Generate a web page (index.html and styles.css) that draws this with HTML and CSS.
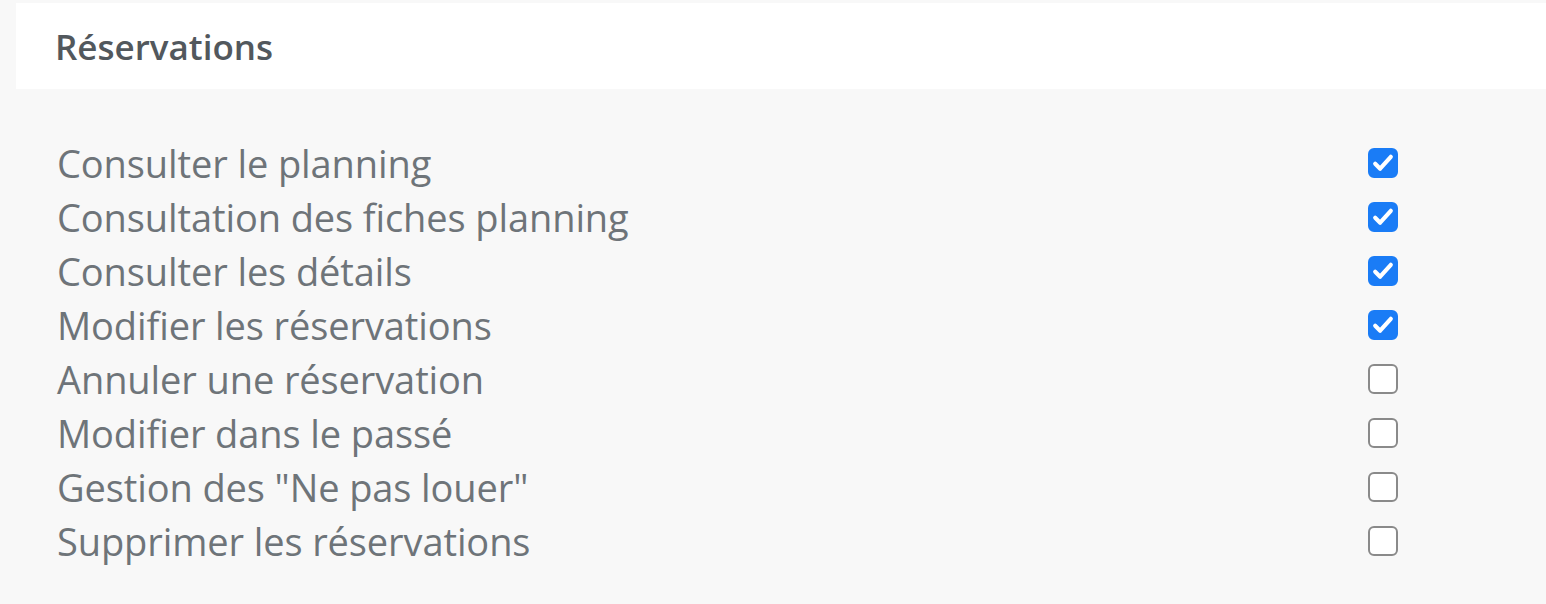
FILE: index.html
```html
<!DOCTYPE html>
<html lang="fr">
<head>
    <meta charset="UTF-8">
    <title>Réservations</title>
    <link rel="stylesheet" href="styles.css">
</head>
<body>
    <div class="card">
        <div class="card-header">Réservations</div>
        <div class="card-body">
            <label class="perm"><span>Consulter le planning</span><input type="checkbox" checked></label>
            <label class="perm"><span>Consultation des fiches planning</span><input type="checkbox" checked></label>
            <label class="perm"><span>Consulter les détails</span><input type="checkbox" checked></label>
            <label class="perm"><span>Modifier les réservations</span><input type="checkbox" checked></label>
            <label class="perm"><span>Annuler une réservation</span><input type="checkbox"></label>
            <label class="perm"><span>Modifier dans le passé</span><input type="checkbox"></label>
            <label class="perm"><span>Gestion des "Ne pas louer"</span><input type="checkbox"></label>
            <label class="perm"><span>Supprimer les réservations</span><input type="checkbox"></label>
        </div>
    </div>
</body>
</html>
```
FILE: styles.css
```css
body {
    margin: 0;
    background-color: #f8f8f8;
    font-family: "Open Sans", "Noto Sans", sans-serif;
}
.card {
    margin: 3px 0 0 16px;
}
.card-header {
    background-color: #fff;
    height: 86px;
    padding-left: 39px;
    display: flex;
    align-items: center;
    font-size: 35px;
    font-weight: 600;
    color: #52585d;
}
.card-body {
    padding: 47px 0 0 41px;
}
.perm {
    display: flex;
    align-items: center;
    justify-content: space-between;
    width: 1341px;
    height: 54px;
    font-size: 38px;
    color: #6e7479;
    letter-spacing: -0.1px;
}
.perm input {
    appearance: none;
    width: 30px;
    height: 30px;
    margin: 0;
    border: 2px solid #8a8a8a;
    border-radius: 6px;
    background-color: #fff;
}
.perm input:checked {
    border-color: #1a7cf6;
    background-color: #1a7cf6;
    background-image: url("data:image/svg+xml,%3Csvg xmlns='http://www.w3.org/2000/svg' viewBox='0 0 20 20'%3E%3Cpath d='M4 10.6l3.8 3.8 8.2-9.2' fill='none' stroke='%23fff' stroke-width='3.2' stroke-linecap='round' stroke-linejoin='round'/%3E%3C/svg%3E");
    background-size: 100% 100%;
}
```
